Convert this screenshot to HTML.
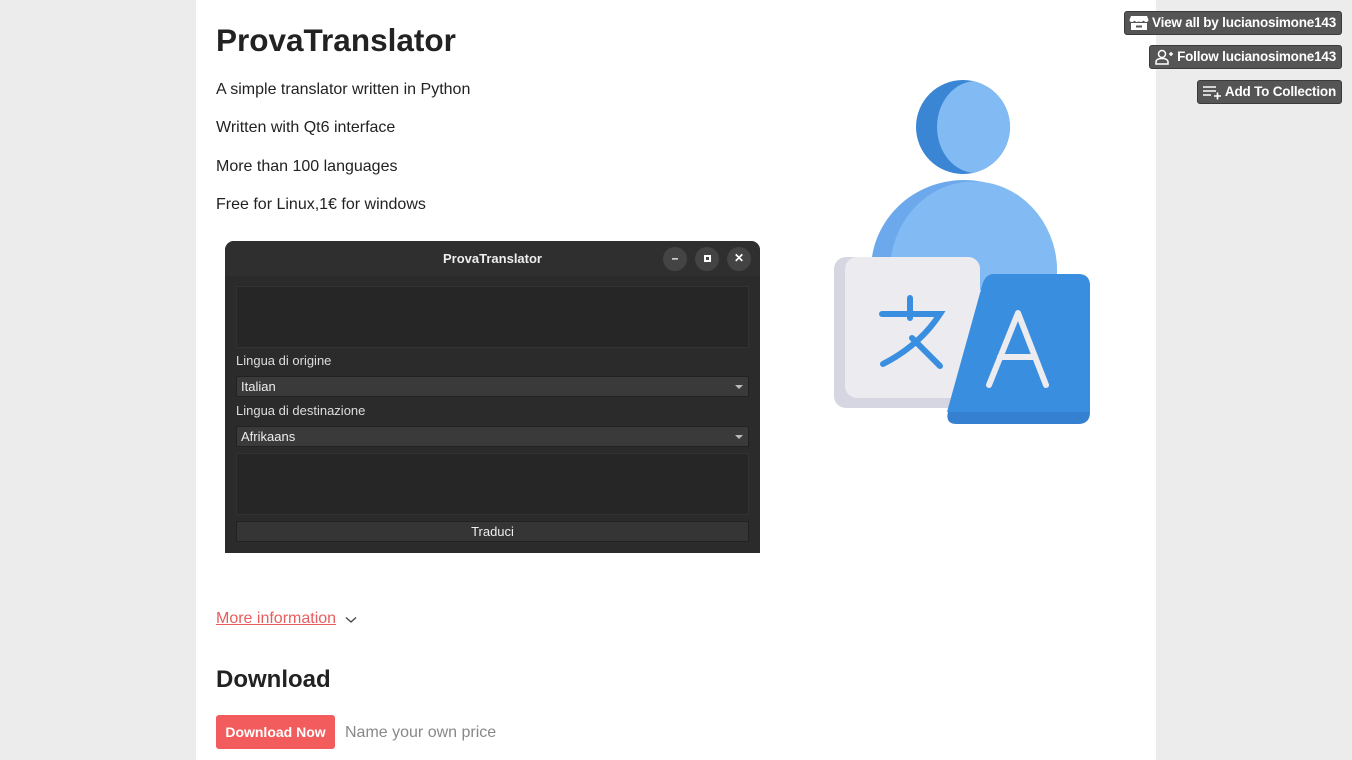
<!DOCTYPE html>
<html><head><meta charset="utf-8"><style>
*{margin:0;padding:0;box-sizing:border-box}
body{width:1352px;height:760px;background:#ececec;font-family:"Liberation Sans",sans-serif;position:relative;overflow:hidden;color:#222}
.col{position:absolute;left:196px;top:0;width:960px;height:760px;background:#fff}
.a{position:absolute;white-space:nowrap}
p.a{font-size:16px;color:#222}
.btn{position:absolute;right:10px;height:24px;background:#555;border:1px solid #3a3a3a;border-radius:3px;color:#fff;font-size:13.5px;font-weight:bold;line-height:22px;padding:0 5px 0 4px;display:flex;align-items:center;gap:3px;letter-spacing:-0.2px}
.win{position:absolute;left:225px;top:241px;width:535px;height:312px;background:#2b2b2b;border-radius:9px 9px 0 0;overflow:hidden;font-size:13px;color:#ddd}
.tb{height:35px;background:#2f2f2f;text-align:center;line-height:36px;font-weight:bold;color:#eee}
.cb{position:absolute;width:24px;height:24px;border-radius:50%;background:#444;top:6px;color:#fff;text-align:center;line-height:23px;font-size:12px;font-weight:bold}
.ta{position:absolute;left:11px;width:513px;height:62px;background:#262626;border:1px solid #323232}
.combo{position:absolute;left:11px;width:513px;height:21px;background:#3a3a3a;border:1px solid #222;border-radius:2px;line-height:19px;padding-left:4px;color:#eee}
.dd:after{content:"";position:absolute;right:5px;top:8px;border:4px solid transparent;border-top:4px solid #bbb;border-bottom:0}
.lbl{position:absolute;left:11px;color:#ddd}
</style></head><body>
<div class="col"></div>
<div class="a" style="left:216px;top:22px;font-size:31.5px;font-weight:bold;color:#222">ProvaTranslator</div>
<p class="a" style="left:216px;top:81px">A simple translator written in Python</p>
<p class="a" style="left:216px;top:119px">Written with Qt6 interface</p>
<p class="a" style="left:216px;top:158px">More than 100 languages</p>
<p class="a" style="left:216px;top:196px">Free for Linux,1€ for windows</p>

<div class="win">
 <div class="tb">ProvaTranslator</div>
 <div class="cb" style="left:438px">–</div>
 <div class="cb" style="left:470px"><span style="display:inline-block;width:7px;height:7px;border:2px solid #fff;margin-top:8px"></span></div>
 <div class="cb" style="left:502px">✕</div>
 <div class="ta" style="top:45px"></div>
 <div class="lbl" style="top:112px">Lingua di origine</div>
 <div class="combo dd" style="top:135px">Italian</div>
 <div class="lbl" style="top:162px">Lingua di destinazione</div>
 <div class="combo dd" style="top:185px">Afrikaans</div>
 <div class="ta" style="top:212px"></div>
 <div class="combo" style="top:280px;text-align:center;padding:0;background:#353535">Traduci</div>
</div>

<svg class="a" style="left:0;top:0" width="1352" height="760">
 <defs><clipPath id="hc"><circle cx="963" cy="127" r="47"/></clipPath></defs>
 <circle cx="963" cy="127" r="47" fill="#3a86d4"/>
 <ellipse cx="976" cy="127" rx="39" ry="46" fill="#82baf3" clip-path="url(#hc)"/>
 <path d="M871 290 L871 270 A93 90 0 0 1 1057 270 L1057 290Z" fill="#6ca9ec"/>
 <path d="M890 290 L890 272 A82 88 0 0 1 1057 270 L1057 290Z" fill="#82baf3"/>
 <rect x="834" y="257" width="146" height="151" rx="12" fill="#d6d6e2"/>
 <rect x="845" y="257" width="135" height="141" rx="12" fill="#ebebf0"/>
 <path d="M994 274 H1078 Q1090 274 1090 286 V412 Q1090 424 1078 424 H957 Q945 424 948 412 L982 286 Q985 274 994 274Z" fill="#3580d0"/>
 <path d="M994 274 H1078 Q1090 274 1090 286 V412 H947 L982 286 Q985 274 994 274Z" fill="#3a8ee0"/>
 <g stroke="#3a8ee0" stroke-width="6" stroke-linecap="round" fill="none">
  <path d="M910 298 V318"/><path d="M882 314 H940 Q920 345 883 364"/><path d="M912 338 L940 366"/>
 </g>
 <g stroke="#ebebf0" stroke-width="6" stroke-linecap="round" stroke-linejoin="round" fill="none">
  <path d="M989 385 L1018 313 L1046 385"/><path d="M1000 357 H1035"/>
 </g>
</svg>

<div class="btn" style="top:11px"><svg width="20" height="16" viewBox="0 0 20 16"><path d="M2 1h16l1.5 4c0 1.5-1.5 2-2.5 2s-2-.8-2.3-1.5C14 6.3 13 7 11.5 7 10.5 7 10 6.5 10 6c0 .5-1 1-2 1-1.2 0-2.2-.7-2.5-1.5C5.2 6.3 4 7 3 7S.5 6.5.5 5Z" fill="#fff"/><path d="M2 8v7h16V8" fill="#fff"/><path d="M7 10.5h6v2H7z" fill="#555"/></svg>View all by lucianosimone143</div>
<div class="btn" style="top:45px"><svg width="20" height="16" viewBox="0 0 20 16" fill="none" stroke="#fff" stroke-width="1.5"><circle cx="8" cy="5" r="3.5"/><path d="M2 15v-2c0-2 2-3.5 6-3.5s6 1.5 6 3.5v2H2z"/><path d="M15 5h4M17 3v4"/></svg>Follow lucianosimone143</div>
<div class="btn" style="top:80px"><svg width="20" height="16" viewBox="0 0 20 16" stroke="#fff" stroke-width="1.6"><path d="M1 3h13M1 7h13M1 11h8M12 12h7M15.5 8.5v7"/></svg>Add To Collection</div>

<div class="a" style="left:216px;top:610px;font-size:16px;color:#e85d5d;text-decoration:underline">More information</div>
<svg class="a" style="left:345px;top:616px" width="12" height="8"><path d="M1 1.5 L6 6 L11 1.5" stroke="#444" stroke-width="1.3" fill="none"/></svg>
<div class="a" style="left:216px;top:666px;font-size:24px;font-weight:bold;color:#222">Download</div>
<div class="a" style="left:216px;top:715px;width:119px;height:34px;background:#f25c5c;border-radius:3px;color:#fff;font-size:14px;font-weight:bold;text-align:center;line-height:34px">Download Now</div>
<div class="a" style="left:345px;top:724px;font-size:16px;color:#888">Name your own price</div>
</body></html>
